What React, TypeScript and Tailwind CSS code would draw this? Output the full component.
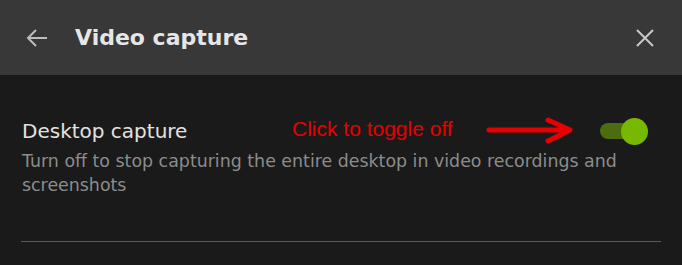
import React, { useState } from 'react';

const App: React.FC = () => {
  const [on, setOn] = useState(true);

  return (
    <div className="w-[682px] h-[265px] bg-[#1a1a1a] overflow-hidden" style={{ fontFamily: '"DejaVu Sans", sans-serif' }}>
      {/* Header */}
      <div className="h-[75px] bg-[#383838] flex items-center pl-[26px] pr-[28px]">
        <svg width="22" height="18" viewBox="0 0 22 18" fill="none" stroke="#bdbdbd" strokeWidth="2" className="mr-[27px]">
          <path d="M21 9H2M10 1L2 9l8 8" />
        </svg>
        <div className="flex-1 text-[22px] font-bold text-[#e6e6e6]">Video capture</div>
        <svg width="18" height="18" viewBox="0 0 18 18" fill="none" stroke="#c8c8c8" strokeWidth="2">
          <path d="M1 1l16 16M17 1L1 17" />
        </svg>
      </div>

      {/* Setting row */}
      <div className="relative px-[22px] pt-[41px]">
        <div className="flex items-center justify-between">
          <div className="text-[20px] text-[#e2e2e2] leading-[26px]">Desktop capture</div>
          <button
            onClick={() => setOn(!on)}
            className="relative w-[48px] h-[27px] mr-[12px] mt-[2px] shrink-0"
          >
            <span className={`absolute left-0 top-[5px] w-[42px] h-[16px] rounded-full ${on ? 'bg-[#4b6d10]' : 'bg-[#555]'}`} />
            <span className={`absolute top-0 w-[27px] h-[27px] rounded-full ${on ? 'left-[21px] bg-[#76b900]' : 'left-0 bg-[#aaa]'}`} />
          </button>
        </div>
        <div className="max-w-[630px] text-[17.4px] text-[#8c8c8c] leading-[24px] mt-[4px]">
          Turn off to stop capturing the entire desktop in video recordings and screenshots
        </div>

        {/* Annotation */}
        <div className="absolute left-[292px] top-[39px] flex items-center">
          <span className="text-[21px] text-[#e60000] leading-[26px]" style={{ fontFamily: '"Liberation Sans", Arial, sans-serif' }}>
            Click to toggle off
          </span>
          <svg width="90" height="28" viewBox="0 0 90 28" className="ml-[33px] mt-[2px]" fill="none" stroke="#e60000" strokeWidth="5" strokeLinecap="round" strokeLinejoin="round">
            <path d="M3 14H83M62 4l22 10-22 11" />
          </svg>
        </div>

        <div className="mt-[44px] mx-[-1px] h-px bg-[#5a5a5a]" />
      </div>
    </div>
  );
};

export default App;
